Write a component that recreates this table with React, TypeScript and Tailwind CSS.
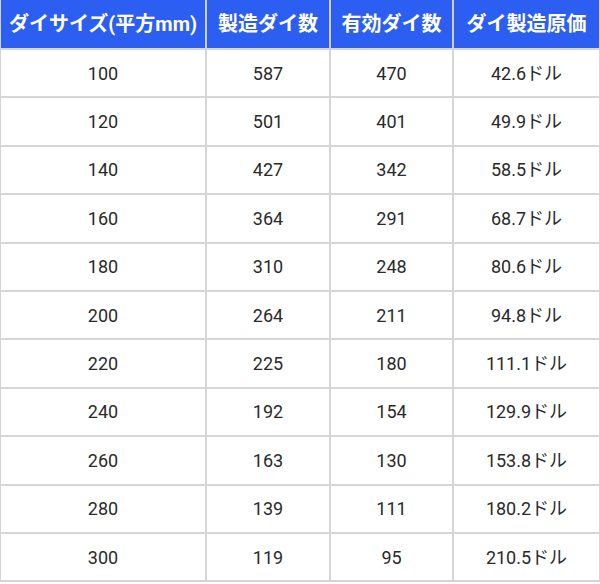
import React from "react";

const rows: [string, string, string, string][] = [
  ["100", "587", "470", "42.6ドル"],
  ["120", "501", "401", "49.9ドル"],
  ["140", "427", "342", "58.5ドル"],
  ["160", "364", "291", "68.7ドル"],
  ["180", "310", "248", "80.6ドル"],
  ["200", "264", "211", "94.8ドル"],
  ["220", "225", "180", "111.1ドル"],
  ["240", "192", "154", "129.9ドル"],
  ["260", "163", "130", "153.8ドル"],
  ["280", "139", "111", "180.2ドル"],
  ["300", "119", "95", "210.5ドル"],
];

const headers = ["ダイサイズ(平方mm)", "製造ダイ数", "有効ダイ数", "ダイ製造原価"];

export default function App() {
  return (
    <div
      className="w-[600px] h-[584px] bg-white overflow-hidden"
      style={{ fontFamily: 'Roboto, "Noto Sans CJK JP", sans-serif' }}
    >
      <div className="grid grid-cols-[206px_124px_123px_147px] border-l border-b-2 border-[#d4d4d4]">
        {headers.map((h) => (
          <div
            key={h}
            className="h-[48px] bg-[#2d5ef2] text-white font-bold text-[20px] flex items-center justify-center border-r-2 border-[#cfcfcf]"
          >
            {h}
          </div>
        ))}
        {rows.map((r, ri) =>
          r.map((c, ci) => (
            <div
              key={`${ri}-${ci}`}
              className="h-[48.4px] border-t-2 border-r-2 border-[#d6d6d6] flex items-center justify-center text-[18px] text-[#2a2a2a]"
            >
              {c}
            </div>
          ))
        )}
      </div>
    </div>
  );
}
